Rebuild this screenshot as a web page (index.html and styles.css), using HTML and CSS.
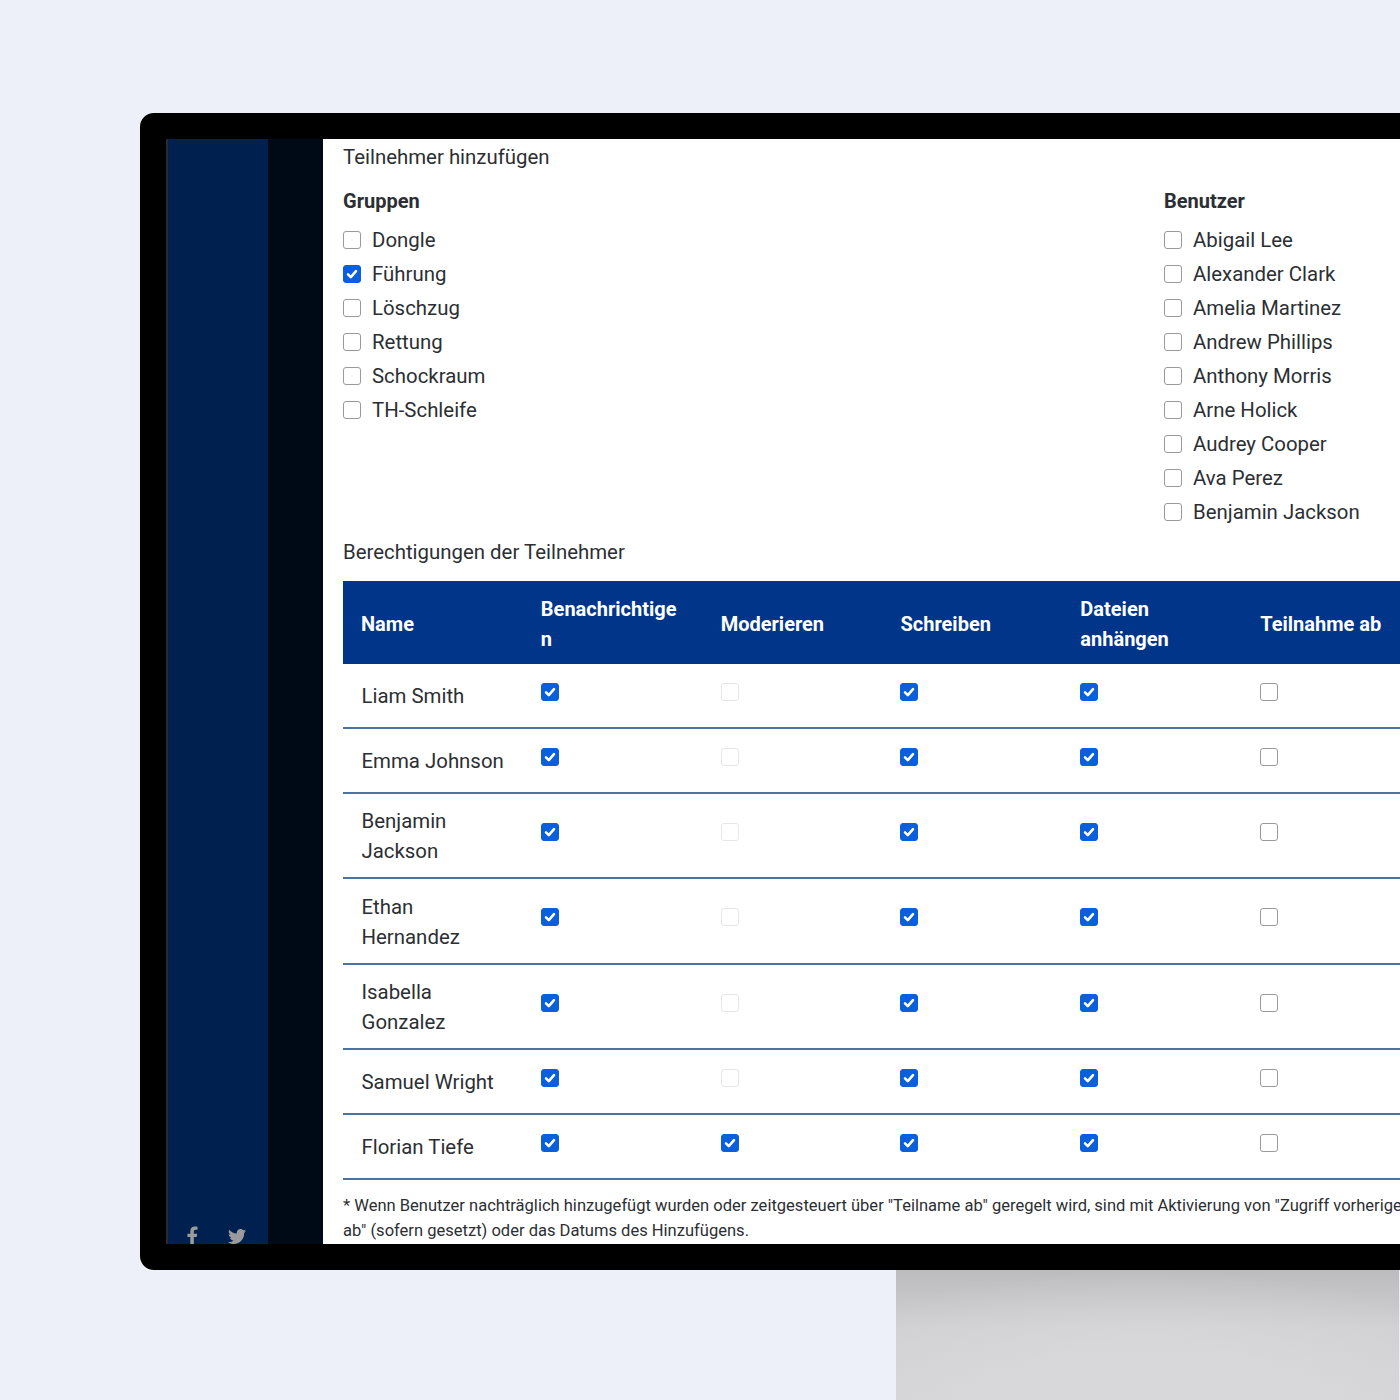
FILE: index.html
```html
<!DOCTYPE html>
<html lang="de">
<head>
  <meta charset="UTF-8">
  <meta name="viewport" content="width=device-width, initial-scale=1.0">
  <title>Teilnehmer hinzufügen</title>
  <link rel="stylesheet" href="styles.css">
</head>
<body>
  <div class="monitor">
    <div class="screen">
      <div class="sidebar">
        <div class="social">
          <svg class="icon-fb" viewBox="0 0 12 22" width="11" height="20"><path d="M3.6 22V12.2H.4V8.4h3.2V5.6C3.600 2.300 5.600.6 8.500.6c1.400 0 2.600.1 3 .2v3.400H9.400c-1.600 0-1.900.8-1.900 1.900v2.300h3.700l-.5 3.800H7.500V22z"/></svg>
          <svg class="icon-tw" viewBox="0 0 24 20" width="18" height="15"><path d="M24 2.400c-.9.400-1.800.7-2.800.8 1-.6 1.800-1.600 2.200-2.700-1 .6-2 1-3.100 1.200C19.300.7 18 0 16.600 0c-2.700 0-4.900 2.200-4.900 4.900 0 .4 0 .8.100 1.100C7.700 5.800 4.100 3.900 1.700.9 1.200 1.600 1 2.500 1 3.400c0 1.700.9 3.200 2.200 4.100-.8 0-1.600-.2-2.200-.6v.1c0 2.400 1.700 4.400 3.900 4.800-.4.100-.8.200-1.300.2-.3 0-.6 0-.9-.1.600 2 2.400 3.400 4.600 3.400-1.700 1.300-3.800 2.100-6.100 2.100-.4 0-.8 0-1.200-.1C2.200 19.200 4.800 20 7.500 20c9.100 0 14-7.500 14-14v-.6c1-.7 1.800-1.600 2.500-3z"/></svg>
        </div>
      </div>
      <div class="sidebar-dark"></div>
      <div class="content">
        <div class="section-title">Teilnehmer hinzufügen</div>
        <div class="pickers">
          <div class="picker picker-groups">
            <div class="picker-head">Gruppen</div>
            <label class="check-row"><input type="checkbox" class="check">Dongle</label>
            <label class="check-row"><input type="checkbox" class="check" checked>Führung</label>
            <label class="check-row"><input type="checkbox" class="check">Löschzug</label>
            <label class="check-row"><input type="checkbox" class="check">Rettung</label>
            <label class="check-row"><input type="checkbox" class="check">Schockraum</label>
            <label class="check-row"><input type="checkbox" class="check">TH-Schleife</label>
          </div>
          <div class="picker">
            <div class="picker-head">Benutzer</div>
            <label class="check-row"><input type="checkbox" class="check">Abigail Lee</label>
            <label class="check-row"><input type="checkbox" class="check">Alexander Clark</label>
            <label class="check-row"><input type="checkbox" class="check">Amelia Martinez</label>
            <label class="check-row"><input type="checkbox" class="check">Andrew Phillips</label>
            <label class="check-row"><input type="checkbox" class="check">Anthony Morris</label>
            <label class="check-row"><input type="checkbox" class="check">Arne Holick</label>
            <label class="check-row"><input type="checkbox" class="check">Audrey Cooper</label>
            <label class="check-row"><input type="checkbox" class="check">Ava Perez</label>
            <label class="check-row"><input type="checkbox" class="check">Benjamin Jackson</label>
          </div>
        </div>
        <div class="section-title perms-title">Berechtigungen der Teilnehmer</div>
        <table class="perms">
          <thead>
            <tr>
              <th>Name</th>
              <th>Benachrichtigen</th>
              <th>Moderieren</th>
              <th>Schreiben</th>
              <th>Dateien anhängen</th>
              <th>Teilnahme ab</th>
            </tr>
          </thead>
          <tbody>
            <tr>
              <td>Liam Smith</td>
              <td><input type="checkbox" class="check" checked></td>
              <td><input type="checkbox" class="check" disabled></td>
              <td><input type="checkbox" class="check" checked></td>
              <td><input type="checkbox" class="check" checked></td>
              <td><input type="checkbox" class="check"></td>
            </tr>
            <tr>
              <td>Emma Johnson</td>
              <td><input type="checkbox" class="check" checked></td>
              <td><input type="checkbox" class="check" disabled></td>
              <td><input type="checkbox" class="check" checked></td>
              <td><input type="checkbox" class="check" checked></td>
              <td><input type="checkbox" class="check"></td>
            </tr>
            <tr>
              <td>Benjamin Jackson</td>
              <td><input type="checkbox" class="check" checked></td>
              <td><input type="checkbox" class="check" disabled></td>
              <td><input type="checkbox" class="check" checked></td>
              <td><input type="checkbox" class="check" checked></td>
              <td><input type="checkbox" class="check"></td>
            </tr>
            <tr>
              <td>Ethan Hernandez</td>
              <td><input type="checkbox" class="check" checked></td>
              <td><input type="checkbox" class="check" disabled></td>
              <td><input type="checkbox" class="check" checked></td>
              <td><input type="checkbox" class="check" checked></td>
              <td><input type="checkbox" class="check"></td>
            </tr>
            <tr>
              <td>Isabella Gonzalez</td>
              <td><input type="checkbox" class="check" checked></td>
              <td><input type="checkbox" class="check" disabled></td>
              <td><input type="checkbox" class="check" checked></td>
              <td><input type="checkbox" class="check" checked></td>
              <td><input type="checkbox" class="check"></td>
            </tr>
            <tr>
              <td>Samuel Wright</td>
              <td><input type="checkbox" class="check" checked></td>
              <td><input type="checkbox" class="check" disabled></td>
              <td><input type="checkbox" class="check" checked></td>
              <td><input type="checkbox" class="check" checked></td>
              <td><input type="checkbox" class="check"></td>
            </tr>
            <tr>
              <td>Florian Tiefe</td>
              <td><input type="checkbox" class="check" checked></td>
              <td><input type="checkbox" class="check" checked></td>
              <td><input type="checkbox" class="check" checked></td>
              <td><input type="checkbox" class="check" checked></td>
              <td><input type="checkbox" class="check"></td>
            </tr>
          </tbody>
        </table>
        <p class="note">* Wenn Benutzer nachträglich hinzugefügt wurden oder zeitgesteuert über "Teilname ab" geregelt wird, sind mit Aktivierung von "Zugriff vorherige<br>ab" (sofern gesetzt) oder das Datums des Hinzufügens.</p>
      </div>
    </div>
  </div>
  <div class="stand"></div>
</body>
</html>
```
FILE: styles.css
```css
html,
body {
  margin: 0;
  padding: 0;
  height: 1400px;
  overflow: hidden;
}
body {
  background-color: #edf0f9;
  font-family: Roboto, Arial, sans-serif;
  color: #2b2f33;
}
.monitor {
  box-sizing: border-box;
  width: 1400px;
  height: 1157px;
  margin: 113px 0 0 140px;
  border: 26px solid #000;
  border-radius: 14px;
  background-color: #000;
}
.screen {
  display: flex;
  height: 1105px;
  width: 1400px;
  overflow: hidden;
}
.sidebar {
  flex: 0 0 102px;
  box-sizing: border-box;
  display: flex;
  align-items: flex-end;
  background-color: #00204f;
  border-left: 2px solid #2a2a2c;
  overflow: hidden;
}
.social {
  display: flex;
  align-items: flex-start;
  gap: 30px;
  height: 18px;
  padding-left: 19px;
  fill: #9b9b9b;
}
.icon-tw {
  margin-top: 3px;
}
.sidebar-dark {
  flex: 0 0 55px;
  background-color: #000a16;
}
.content {
  flex: 1;
  min-width: 0;
  padding-left: 20px;
  background-color: #fff;
}
.section-title {
  font-size: 20.4px;
  line-height: 36px;
}
.pickers {
  display: flex;
  margin-top: 8px;
}
.picker-groups {
  flex: 0 0 821px;
}
.picker-head {
  font-size: 20px;
  font-weight: 700;
  line-height: 36px;
  margin-bottom: 4px;
}
.check-row {
  display: flex;
  align-items: center;
  gap: 11px;
  height: 34px;
  font-size: 20.4px;
}
.check {
  appearance: none;
  display: block;
  flex: none;
  box-sizing: border-box;
  width: 18px;
  height: 18px;
  margin: 0;
  background-color: #fff;
  border: 1px solid #9a9a9a;
  border-radius: 3px;
}
.check:checked {
  background-color: #0a5fdc;
  border-color: #0a5fdc;
  background-image: url("data:image/svg+xml,%3Csvg xmlns='http://www.w3.org/2000/svg' viewBox='0 0 20 20'%3E%3Cpath fill='none' stroke='%23fff' stroke-linecap='round' stroke-linejoin='round' stroke-width='3.200' d='M5 10.500l3.500 3.500L15 6.500'/%3E%3C/svg%3E");
}
.check:disabled {
  border-color: #e6e6e6;
}
.perms-title {
  margin-top: 5px;
}
.perms {
  table-layout: fixed;
  border-collapse: collapse;
  width: 1079px;
  margin-top: 11px;
}
.perms th {
  padding: 13px 18px 10.4px;
  background-color: #00358a;
  color: #fff;
  font-size: 20px;
  font-weight: 700;
  line-height: 30px;
  text-align: left;
  overflow-wrap: break-word;
}
.perms td {
  padding: 11.75px 18px;
  border-bottom: 2px solid #4a72a3;
  font-size: 20.4px;
  line-height: 30px;
  vertical-align: middle;
}
.perms td:first-child {
  padding: 12.5px 18px 11px 18.5px;
}
.perms td .check {
  margin: 7px 0 14.2px;
}
.note {
  margin: 13px 0 0;
  font-size: 16.55px;
  line-height: 25px;
  white-space: nowrap;
}
.stand {
  height: 130px;
  width: 503px;
  margin-left: 896px;
  background:
    radial-gradient(ellipse 75% 100% at 50% 100%, rgba(218, 218, 220, 0.7) 40%, rgba(218, 218, 220, 0) 100%),
    linear-gradient(#bcbcbe, #d0d0d2 45%, #d4d4d6);
}
```
